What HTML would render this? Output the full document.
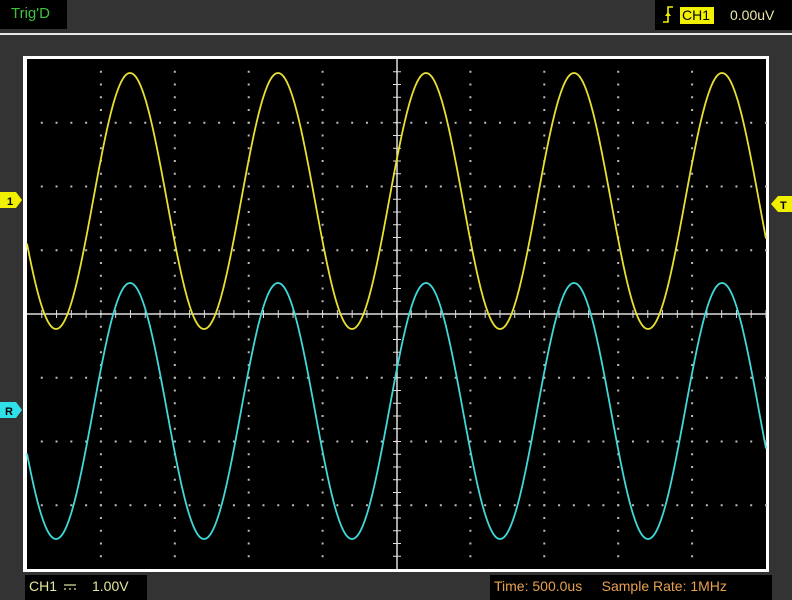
<!DOCTYPE html>
<html><head><meta charset="utf-8"><style>
html,body{margin:0;padding:0;}
body{width:792px;height:600px;background:#333333;position:relative;overflow:hidden;font-family:"Liberation Sans",sans-serif;}
.box{position:absolute;background:#000;}
</style></head><body>
<div class="box" style="left:0;top:0;width:67px;height:29px;"></div>
<div style="position:absolute;left:11px;top:5px;color:#3ec23e;font-size:15px;">Trig'D</div>
<div class="box" style="left:655px;top:0;width:137px;height:30px;"></div>
<svg style="position:absolute;left:660px;top:4px" width="16" height="22"><path d="M3 18 H8 V3 H13" stroke="#f0f000" stroke-width="1.6" fill="none"/><path d="M5 12 L8 8 L11 12Z" fill="#f0f000"/></svg>
<div style="position:absolute;left:680px;top:7px;width:34px;height:17px;background:#f2f200;"></div>
<div style="position:absolute;left:682px;top:7px;color:#000;font-size:14px;">CH1</div>
<div style="position:absolute;left:730px;top:7px;color:#e8e8a8;font-size:14px;">0.00uV</div>
<div style="position:absolute;left:0;top:33px;width:792px;height:2px;background:#e8e8e8;"></div>
<div style="position:absolute;left:23px;top:56px;width:746px;height:516px;background:#fff;"></div>
<svg style="position:absolute;left:0;top:0" width="792" height="600" id="sv">
<rect x="27" y="59" width="739" height="510" fill="#000"/>
<g id="grid"></g>
<path id="yel" fill="none" stroke="#e8e030" stroke-width="1.8"/>
<path id="cy" fill="none" stroke="#40d8d8" stroke-width="1.8"/>
<path d="M0 192 H16 L22 200 L16 208 H0Z" fill="#f0f000"/>
<text x="7" y="205" font-size="11" font-family="Liberation Sans" font-weight="bold">1</text>
<path d="M0 402 H16 L22 410 L16 418 H0Z" fill="#30e0e8"/>
<text x="5" y="415" font-size="11" font-family="Liberation Sans" font-weight="bold">R</text>
<path d="M792 196 H778 L771 204 L778 212 H792Z" fill="#f0f000"/>
<text x="780" y="209" font-size="11" font-family="Liberation Sans" font-weight="bold">T</text>
<g stroke="#e6e6a0" stroke-width="1.2"><line x1="64" y1="585" x2="76" y2="585"/><line x1="64" y1="589" x2="66" y2="589"/><line x1="69" y1="589" x2="71" y2="589"/><line x1="74" y1="589" x2="76" y2="589"/></g>
</svg>
<div class="box" style="left:25px;top:575px;width:122px;height:25px;z-index:-1"></div>
<div style="position:absolute;left:29px;top:578px;color:#e6e6a0;font-size:14px;">CH1</div>
<div style="position:absolute;left:92px;top:578px;color:#e6e6a0;font-size:14px;">1.00V</div>
<div class="box" style="left:490px;top:575px;width:282px;height:25px;"></div>
<div style="position:absolute;left:494px;top:578px;color:#e8a050;font-size:14px;">Time: 500.0us&nbsp;&nbsp;&nbsp;&nbsp; Sample Rate: 1MHz</div>
<script>
var g=document.getElementById('grid'),s='';
var xs=[],ys=[];
for(var i=0;i<=10;i++)xs.push(27+73.9*i);
for(var j=0;j<=8;j++)ys.push(59+63.75*j);
for(var i=1;i<10;i++){if(i==5)continue;for(var y=59+12.75;y<569;y+=12.75)s+='<rect x="'+(xs[i]-1)+'" y="'+(y-1)+'" width="2" height="2" fill="#bbb"/>';}
for(var j=1;j<8;j++){if(j==4)continue;for(var x=27+14.78;x<766;x+=14.78)s+='<rect x="'+(x-1)+'" y="'+(ys[j]-1)+'" width="2" height="2" fill="#bbb"/>';}
s+='<line x1="27" y1="314" x2="766" y2="314" stroke="#ddd" stroke-width="1.5"/>';
s+='<line x1="397" y1="59" x2="397" y2="569" stroke="#ddd" stroke-width="1.5"/>';
for(var x=27+14.78;x<766;x+=14.78)s+='<line x1="'+x+'" y1="310" x2="'+x+'" y2="318" stroke="#ddd"/>';
for(var y=59+12.75;y<569;y+=12.75)s+='<line x1="393" y1="'+y+'" x2="401" y2="'+y+'" stroke="#ddd"/>';
g.innerHTML=s;
function w(c){var d='';for(var x=27;x<=766;x+=1){var y=c-128*Math.cos(2*Math.PI*(x-130)/148);d+=(x==27?'M':'L')+x+' '+y.toFixed(1);}return d;}
document.getElementById('yel').setAttribute('d',w(201));
document.getElementById('cy').setAttribute('d',w(411));
</script>
</body></html>
